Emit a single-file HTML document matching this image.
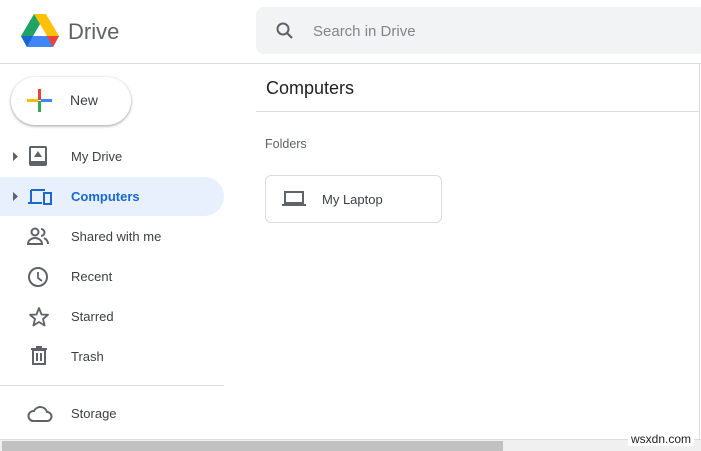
<!DOCTYPE html>
<html><head><style>
*{margin:0;padding:0;box-sizing:border-box}
body{width:701px;height:451px;overflow:hidden;background:#fff;font-family:"Liberation Sans",Arial,sans-serif;position:relative;color:#3c4043}
.a{position:absolute}
.nav{position:absolute;left:71px;font-size:13px;color:#3c4043}
.ic{position:absolute;left:27px}
</style></head><body>
<!-- logo -->
<svg class="a" style="left:21px;top:14px" width="38" height="34" viewBox="0 0 38 34">
<polygon points="13,0 25,0 12,22 6,33 0,22" fill="#1fa463"/>
<polygon points="13,0 25,0 38,22 26,22" fill="#ffc107"/>
<polygon points="0,22 38,22 32,33 6,33" fill="#4285f4"/>
<polygon points="26,22 38,22 32,33" fill="#ea4335"/>
<polygon points="0,22 12,22 6,33" fill="#1967d2"/>
</svg>
<div class="a" style="left:68px;top:19px;font-size:22px;color:#5f6368">Drive</div>
<!-- search -->
<div class="a" style="left:256px;top:7px;width:450px;height:47px;background:#f1f3f4;border-radius:8px"></div>
<svg class="a" style="left:275px;top:21px" width="20" height="20" viewBox="0 0 20 20"><circle cx="8" cy="8" r="5.5" fill="none" stroke="#5f6368" stroke-width="2"/><line x1="12" y1="12" x2="17" y2="17" stroke="#5f6368" stroke-width="2.2"/></svg>
<div class="a" style="left:313px;top:23px;font-size:15px;color:#80868b">Search in Drive</div>
<div class="a" style="left:0;top:63px;width:701px;height:1px;background:#dadce0"></div>
<!-- New -->
<div class="a" style="left:11px;top:77px;width:120px;height:48px;border-radius:24px;background:#fff;box-shadow:0 1px 3px rgba(60,64,67,.35),0 1px 2px rgba(60,64,67,.2)"></div>
<div class="a" style="left:38px;top:89px;width:3px;height:11px;background:#ea4335"></div>
<div class="a" style="left:38px;top:101px;width:3px;height:11px;background:#34a853"></div>
<div class="a" style="left:27px;top:99px;width:11px;height:3px;background:#fbbc04"></div>
<div class="a" style="left:41px;top:99px;width:11px;height:3px;background:#4285f4"></div>
<div class="a" style="left:70px;top:92px;font-size:14px;color:#3c4043">New</div>
<!-- nav -->
<div class="a" style="left:0;top:177px;width:224px;height:39px;background:#e8f0fe;border-radius:0 20px 20px 0"></div>
<svg class="a" style="left:13px;top:152px" width="6" height="9"><polygon points="0,0 5,4.5 0,9" fill="#5f6368"/></svg>
<svg class="a" style="left:13px;top:192px" width="6" height="9"><polygon points="0,0 5,4.5 0,9" fill="#5f6368"/></svg>
<svg class="ic" style="top:146px;left:29px" width="20" height="20" viewBox="0 0 20 20"><rect x="1" y="1" width="16" height="18" rx="1" fill="none" stroke="#5f6368" stroke-width="2"/><rect x="1" y="15" width="16" height="4" fill="#5f6368"/><polygon points="9,5 13,11 5,11" fill="#5f6368"/></svg>
<div class="nav" style="top:149px">My Drive</div>
<svg class="ic" style="top:188px" width="26" height="18" viewBox="0 0 26 18"><path d="M4 2h14M4 2v12M1 15h14" stroke="#1967d2" stroke-width="2" fill="none"/><rect x="17" y="5" width="7" height="11" fill="none" stroke="#1967d2" stroke-width="2"/></svg>
<div class="nav" style="top:189px;color:#1967d2;font-weight:bold">Computers</div>
<svg class="ic" style="top:227px" width="24" height="20" viewBox="0 0 24 20"><circle cx="8" cy="5" r="3.5" fill="none" stroke="#5f6368" stroke-width="2"/><path d="M1 17c0-4 4-6 7-6s7 2 7 6z" fill="none" stroke="#5f6368" stroke-width="2"/><path d="M14 2a3.5 3.5 0 0 1 0 7M17 11c2 1 4 3 4 6" stroke="#5f6368" stroke-width="2" fill="none"/></svg>
<div class="nav" style="top:229px">Shared with me</div>
<svg class="ic" style="top:266px" width="22" height="22" viewBox="0 0 22 22"><circle cx="11" cy="11" r="9" fill="none" stroke="#5f6368" stroke-width="2"/><path d="M11 6v6l4 3" stroke="#5f6368" stroke-width="1.8" fill="none"/></svg>
<div class="nav" style="top:269px">Recent</div>
<svg class="ic" style="top:306px;left:28px" width="22" height="22" viewBox="0 0 22 22"><polygon points="11,2 13.5,8.5 20,8.8 15,13 16.6,19.5 11,16 5.4,19.5 7,13 2,8.8 8.5,8.5" fill="none" stroke="#5f6368" stroke-width="1.8" stroke-linejoin="round"/></svg>
<div class="nav" style="top:309px">Starred</div>
<svg class="ic" style="top:346px;left:30px" width="18" height="20" viewBox="0 0 18 20"><path d="M1 3h16M6 1h6" stroke="#5f6368" stroke-width="2"/><rect x="3" y="4" width="12" height="14" fill="none" stroke="#5f6368" stroke-width="2"/><path d="M7 7v8M11 7v8" stroke="#5f6368" stroke-width="2"/></svg>
<div class="nav" style="top:349px">Trash</div>
<div class="a" style="left:0;top:385px;width:224px;height:1px;background:#dadce0"></div>
<svg class="ic" style="top:405px" width="26" height="18" viewBox="0 0 26 18"><path d="M6 16h14a4.5 4.5 0 0 0 0-9 7 7 0 0 0-13-1A5 5 0 0 0 6 16z" fill="none" stroke="#5f6368" stroke-width="2"/></svg>
<div class="nav" style="top:406px">Storage</div>
<!-- main -->
<div class="a" style="left:699px;top:63px;width:1px;height:380px;background:#dadce0"></div>
<div class="a" style="left:266px;top:78px;font-size:18px;color:#202124">Computers</div>
<div class="a" style="left:256px;top:111px;width:444px;height:1px;background:#dadce0"></div>
<div class="a" style="left:265px;top:137px;font-size:12.5px;color:#5f6368">Folders</div>
<div class="a" style="left:265px;top:175px;width:177px;height:48px;border:1px solid #dadce0;border-radius:6px"></div>
<svg class="a" style="left:282px;top:191px" width="24" height="16" viewBox="0 0 24 16"><rect x="3" y="1" width="18" height="11" fill="none" stroke="#5f6368" stroke-width="2"/><rect x="0" y="13" width="24" height="2" fill="#5f6368"/></svg>
<div class="a" style="left:322px;top:192px;font-size:13px;color:#3c4043">My Laptop</div>
<!-- scrollbar -->
<div class="a" style="left:0;top:439px;width:701px;height:12px;background:#f0f0f0;border-top:1px solid #ddd"></div>
<div class="a" style="left:2px;top:441px;width:501px;height:10px;background:#c1c1c1"></div>
<div class="a" style="left:628px;top:432px;font-size:12px;color:#222;background:#fff;padding:0 3px">wsxdn.com</div>
</body></html>
